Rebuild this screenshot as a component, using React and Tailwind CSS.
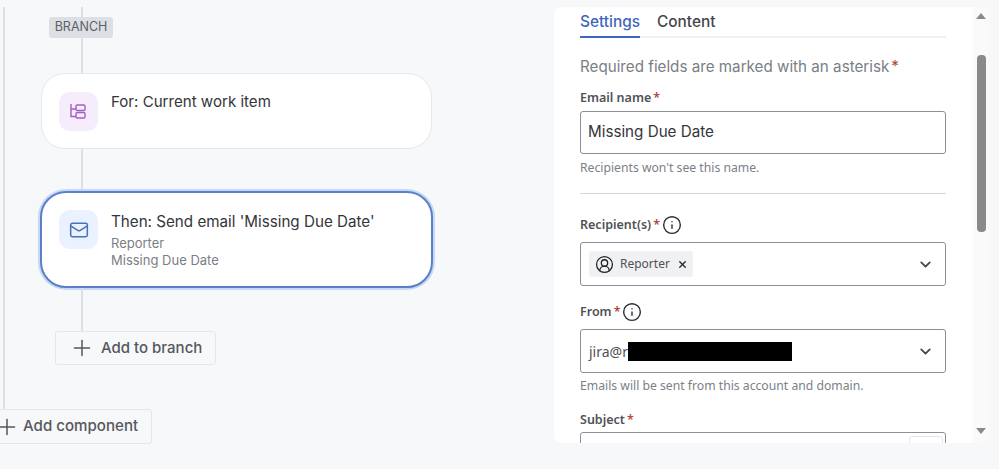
import { ChevronDown, CircleUserRound, Info, Mail, Plus, X } from "lucide-react";

const inter = "font-['Inter',sans-serif]";
const noto = "font-['Noto_Sans',sans-serif]";

const Connector = ({ h }) => <div className={`${h} w-[2px] ml-[41px] bg-[#dcdfe4]`} />;

const Star = () => <span className="ml-[2px] text-[#b3473d]">*</span>;

const Label = ({ children, info }) => (
  <div className={`flex items-center gap-[2px] ${noto} text-[12.5px] font-semibold text-[#505258]`}>
    <span>{children}<Star /></span>
    {info && <Info size={20} strokeWidth={1.7} className="text-[#2c2e33]" />}
  </div>
);

const Hint = ({ children, className }) => (
  <div className={`${noto} text-[12.2px] leading-[18px] text-[#7b8087] ${className}`}>{children}</div>
);

const TreeIcon = () => (
  <svg width="16" height="15" viewBox="0 0 16 15" fill="none" stroke="#a55fc4" strokeWidth="1.4" className="mr-[1px]">
    <path d="M1 0v12.5h5M1 5h5" />
    <rect x="6" y="1" width="9" height="5.5" rx="1.2" />
    <rect x="6" y="8.5" width="9" height="5.5" rx="1.2" />
  </svg>
);

export default function App() {
  return (
    <div className={`flex h-[469px] w-[999px] overflow-hidden bg-[#f7f8f9] ${inter}`}>
      <div className="relative w-[554px] shrink-0 pt-[7px]">
        <div className="absolute left-[3px] top-[7px] h-[402px] w-[2px] bg-[#dcdfe4]" />
        <div className="ml-[40px]">
          <Connector h="h-[10px]" />
          <div className="ml-[9px] flex h-[21px] w-[64px] items-center justify-center rounded-[3px] bg-[#dcdfe4] text-[12.5px] text-[#5c5f66]">
            BRANCH
          </div>
          <Connector h="h-[35px]" />
          <div className="ml-[1px] flex h-[76px] w-[391px] gap-[13px] rounded-[24px] border border-[#e6e8eb] bg-white pl-[17px] pt-[18px]">
            <div className="flex h-[39px] w-[39px] items-center justify-center rounded-[11px] bg-[#f6edfc]">
              <TreeIcon />
            </div>
            <div className="text-[15.1px] leading-[20px] text-[#35363a]">For: Current work item</div>
          </div>
          <Connector h="h-[42px]" />
          <div className="flex h-[97px] w-[393px] gap-[13px] rounded-[26px] border-2 border-[#5b80c8] bg-white pl-[17px] pt-[17px] shadow-[0_0_0_2px_#c5d8f8]">
            <div className="flex h-[39px] w-[39px] items-center justify-center rounded-[11px] bg-[#e9f2fe]">
              <Mail size={20} strokeWidth={1.8} className="text-[#4a6fc0]" />
            </div>
            <div>
              <div className="text-[15.2px] leading-[24px] text-[#35363a]">Then: Send email 'Missing Due Date'</div>
              <div className="mt-[1px] text-[13px] leading-[17px] text-[#7b7e85]">Reporter</div>
              <div className="text-[13px] leading-[17px] text-[#7b7e85]">Missing Due Date</div>
            </div>
          </div>
          <Connector h="h-[43px]" />
          <div className="ml-[15px] flex h-[34px] w-[161px] items-center rounded-[3px] border border-[#e4e6ea] pl-[13px] text-[15px] font-medium text-[#55575d]">
            <Plus size={26} strokeWidth={1.4} className="mr-[6px]" />
            Add to branch
          </div>
        </div>
        <div className="ml-[-10px] mt-[44px] flex h-[35px] w-[162px] items-center rounded-[3px] border border-[#e4e6ea] pl-[3px] text-[15.1px] font-medium text-[#55575d]">
          <Plus size={26} strokeWidth={1.4} className="mr-[3px]" />
          Add component
        </div>
      </div>

      <div className="mt-[7px] flex h-[436px] w-[435px] overflow-hidden rounded-[8px] bg-white">
        <div className="w-[419px] pl-[26px]">
          <div className="flex w-[366px] gap-[17px] border-b-2 border-[#eef0f2] text-[15.4px] font-medium">
            <div className="relative h-[29px] pt-[3px] text-[#3f66bd]">
              Settings
              <div className="absolute bottom-[-2px] left-0 h-[2px] w-full bg-[#3f66bd]" />
            </div>
            <div className="pt-[3px] text-[#44474d]">Content</div>
          </div>
          <div className="mt-[19px] text-[15.2px] leading-[20px] text-[#7b7e85]">
            Required fields are marked with an asterisk<Star />
          </div>
          <div className="mt-[11px] leading-[20px]"><Label>Email name</Label></div>
          <div className="mt-[3px] flex h-[43px] w-[366px] items-center rounded-[3px] border border-[#8c8f97] pl-[7px] text-[15.2px] text-[#35363a]">
            Missing Due Date
          </div>
          <Hint className="mt-[5px]">Recipients won't see this name.</Hint>
          <div className="mt-[16px] h-px w-[366px] bg-[#d4d6da]" />
          <div className="mt-[21px] h-[22px]"><Label info>Recipient(s)</Label></div>
          <div className="mt-[5px] flex h-[44px] w-[366px] items-center justify-between rounded-[3px] border border-[#8c8f97] pl-[8px] pr-[11px]">
            <div className={`flex h-[26px] w-[104px] items-center rounded-[3px] bg-[#f0f1f2] pl-[6px] ${noto} text-[12px] text-[#505258]`}>
              <CircleUserRound size={19} strokeWidth={1.6} className="mr-[6px] text-[#1e1f21]" />
              Reporter
              <X size={11} strokeWidth={3} className="ml-[7px] text-[#292a2e]" />
            </div>
            <ChevronDown size={17} strokeWidth={2.6} className="text-[#44474d]" />
          </div>
          <div className="mt-[16px] h-[22px]"><Label info>From</Label></div>
          <div className="mt-[5px] flex h-[44px] w-[366px] items-center justify-between rounded-[3px] border border-[#8c8f97] pl-[8px] pr-[11px]">
            <div className={`flex items-center ${noto} text-[14px] text-[#505258]`}>
              jira@r
              <div className="h-[19px] w-[164px] bg-black" />
            </div>
            <ChevronDown size={17} strokeWidth={2.6} className="text-[#44474d]" />
          </div>
          <Hint className="mt-[4px]">Emails will be sent from this account and domain.</Hint>
          <div className="mt-[16px] h-[20px]"><Label>Subject</Label></div>
          <div className="mt-[1px] flex h-[44px] w-[366px] justify-end rounded-[3px] border border-[#8c8f97] pr-[2px] pt-[3px]">
            <div className="h-[30px] w-[34px] rounded-[3px] border border-[#e4e6ea]" />
          </div>
        </div>
        <div className="flex w-[16px] flex-col items-center bg-[#fafafa]">
          <div className="mt-[6px] h-0 w-0 border-x-[5px] border-b-[6px] border-x-transparent border-b-[#8a8a8a]" />
          <div className="mt-[36px] h-[177px] w-[9px] rounded-[4px] bg-[#8a8a8a]" />
          <div className="mt-[196px] h-0 w-0 border-x-[5px] border-t-[6px] border-x-transparent border-t-[#8a8a8a]" />
        </div>
      </div>
    </div>
  );
}
